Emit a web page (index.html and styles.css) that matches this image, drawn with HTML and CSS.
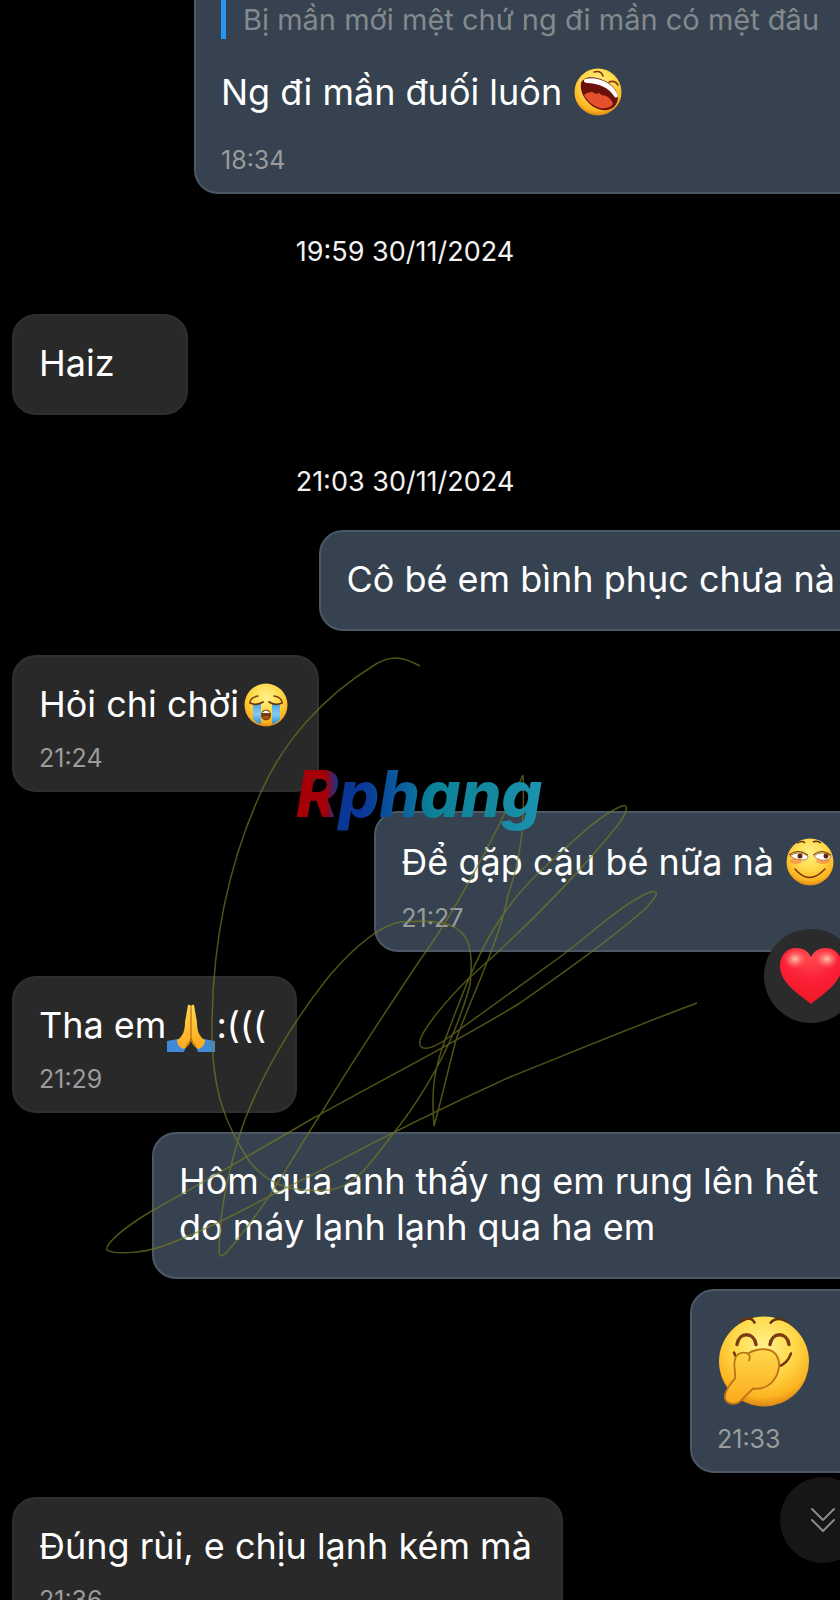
FILE: index.html
```html
<!DOCTYPE html>
<html lang="vi">
<head>
    <meta charset="UTF-8">
    <meta name="viewport" content="width=device-width, initial-scale=1.0">
    <title>Chat</title>
    <link rel="stylesheet" href="styles.css">
</head>
<body>
    <!-- shared gradients for the emoji -->
    <svg class="defs" width="0" height="0" aria-hidden="true">
        <defs>
            <radialGradient id="face" cx="50%" cy="32%" r="68%">
                <stop offset="0" stop-color="#fff18a"/>
                <stop offset="0.5" stop-color="#ffd94a"/>
                <stop offset="0.85" stop-color="#fcb320"/>
                <stop offset="1" stop-color="#dc8617"/>
            </radialGradient>
            <linearGradient id="hand" x1="0" y1="0" x2="0" y2="1">
                <stop offset="0" stop-color="#ffd84c"/>
                <stop offset="1" stop-color="#fca91c"/>
            </linearGradient>
            <linearGradient id="tear" x1="0" y1="0" x2="0" y2="1">
                <stop offset="0" stop-color="#4fa3dd"/>
                <stop offset="0.5" stop-color="#86ccf2"/>
                <stop offset="1" stop-color="#348ed4"/>
            </linearGradient>
            <radialGradient id="heart" cx="50%" cy="15%" r="85%">
                <stop offset="0" stop-color="#ff4a50"/>
                <stop offset="0.5" stop-color="#fc2038"/>
                <stop offset="1" stop-color="#f01822"/>
            </radialGradient>
            <radialGradient id="shine">
                <stop offset="0" stop-color="#ffc9b0"/>
                <stop offset="1" stop-color="#ff6a60" stop-opacity="0"/>
            </radialGradient>
        </defs>
    </svg>

    <main class="chat">
        <article class="bubble sent first">
            <blockquote class="quote">Bị mần mới mệt chứ ng đi mần có mệt đâu</blockquote>
            <p class="text with-emoji">Ng đi mần đuối luôn
                <svg class="emoji spaced" viewBox="0 0 48 48" role="img" aria-label="cười to">
                    <circle cx="24" cy="24" r="23.5" fill="url(#face)"/>
                    <path d="M7 15C10 8 20 8 29 12c9 4 14 10 15 17 0 9-7 14-16 13C16 40 5 27 7 15z" fill="#6b100b"/>
                    <path d="M10 27c5-5 14-3 20 0 5 2 8 5 9 9-3 4-8 5-13 4-7-2-13-7-16-13z" fill="#e5512e"/>
                    <path d="M11 11c13-3 29 4 33 17-1 2-3 2-4 0-5-8-16-13-27-13-3 0-4-3-2-4z" fill="#fff"/>
                    <path d="M19 25l1-5q2-2 3 1l1 5M26 26l1-5q2-1 3 2v5" fill="#6b100b"/>
                    <path d="M20 4q7-2 9 4M35 14q6-2 9 3" fill="none" stroke="#823711" stroke-width="1.6" stroke-linecap="round"/>
                </svg>
            </p>
            <time class="time">18:34</time>
        </article>

        <p class="date">19:59 30/11/2024</p>

        <article class="bubble received">
            <p class="text">Haiz</p>
        </article>

        <p class="date late">21:03 30/11/2024</p>

        <article class="bubble sent">
            <p class="text">Cô bé em bình phục chưa nà</p>
        </article>

        <article class="bubble received">
            <p class="text">Hỏi chi chời<svg class="emoji small" viewBox="0 0 44 44" role="img" aria-label="khóc to">
                    <circle cx="22" cy="22" r="21.5" fill="url(#face)"/>
                    <path d="M9 21h8v20q-5-1-8-5zM28 21h8v15q-3 4-8 5z" fill="url(#tear)"/>
                    <path d="M6 19q1-5 8-6M38 19q-1-5-8-6" fill="none" stroke="#79410d" stroke-width="1.4" stroke-linecap="round"/>
                    <path d="M6 20q7 3 13-1M38 20q-7 3-13-1" fill="none" stroke="#6c3509" stroke-width="1.8" stroke-linecap="round"/>
                    <path d="M17 32c0-7 10-7 10 0s-10 7-10 0z" fill="#74410c"/>
                    <path d="M18 30q4-5 8 0z" fill="#fff"/>
                    <path d="M18 34q4-2 8 0-4 4-8 0z" fill="#b4541b"/>
                </svg></p>
            <time class="time">21:24</time>
        </article>

        <article class="bubble sent">
            <p class="text with-emoji">Để gặp cậu bé nữa nà
                <svg class="emoji spaced" viewBox="0 0 48 48" role="img" aria-label="cười gian">
                    <circle cx="24" cy="24" r="23.5" fill="url(#face)"/>
                    <ellipse cx="10" cy="23" rx="6" ry="3" fill="#f77c4f" opacity="0.6"/>
                    <ellipse cx="37" cy="23" rx="7" ry="3" fill="#f77c4f" opacity="0.6"/>
                    <path d="M4 18q8-6 18 0 0 4-5 4Q9 22 4 18zM28 18q8-6 17 0-1 4-5 4-8 1-12-4z" fill="#fff" stroke="#a5702a" stroke-width="0.8"/>
                    <path d="M3 17q9-7 19 0M27 17q9-7 18 0" fill="none" stroke="#5b3213" stroke-width="1"/>
                    <circle cx="14" cy="18" r="2.5" fill="#5c2812"/>
                    <circle cx="40" cy="18" r="2.5" fill="#5c2812"/>
                    <path d="M11 5q6-3 8 0M27 4q4-2 8 1" fill="none" stroke="#5b3213" stroke-width="1.4"/>
                    <path d="M9 31q14 17 30 0" fill="none" stroke="#70330d" stroke-width="1.4" stroke-linecap="round"/>
                </svg>
            </p>
            <time class="time">21:27</time>
            <button type="button" class="reaction" aria-label="Yêu thích">
                <svg viewBox="0 0 64 58">
                    <path d="M32 57C20 47 1 36 1 19 1 8 8 1 17 1c7 0 12 3 15 9C35 4 40 1 47 1c9 0 16 7 16 18 0 17-19 28-31 38z" fill="url(#heart)"/>
                    <ellipse cx="16" cy="12" rx="12" ry="10" fill="url(#shine)"/>
                    <ellipse cx="48" cy="12" rx="12" ry="10" fill="url(#shine)"/>
                </svg>
            </button>
        </article>

        <article class="bubble received">
            <p class="text">Tha em<svg class="emoji" viewBox="0 0 48 48" role="img" aria-label="chắp tay">
                    <path d="M0 37l11-2 8 8-2 5H0zM48 37l-11-2-8 8 2 5h17z" fill="#3f8bd8"/>
                    <path d="M21 1q3-1 3 3v32c-1 5-5 8-8 9-4-2-6-5-6-9 6-3 8-10 8-18z" fill="url(#hand)"/>
                    <path d="M27 1q-3-1-3 3v32c1 5 5 8 8 9 4-2 6-5 6-9-6-3-8-10-8-18z" fill="url(#hand)"/>
                    <path d="M24 3v31q-1 5-5 8M24 34q1 5 5 8" fill="none" stroke="#b96c0c" stroke-width="1.2"/>
                </svg>:(((</p>
            <time class="time">21:29</time>
        </article>

        <article class="bubble sent">
            <p class="text">Hôm qua anh thấy ng em rung lên hết do máy lạnh lạnh qua ha em</p>
        </article>

        <article class="bubble sent follow">
            <svg class="sticker" viewBox="0 0 92 92" role="img" aria-label="che miệng cười">
                <circle cx="47" cy="46" r="45" fill="url(#face)"/>
                <path d="M23 6q11-7 15 2M53 8q6-8 17-2" fill="none" stroke="#64310f" stroke-width="2.4"/>
                <path d="M20 29c2-13 17-13 19 0M53 29c2-13 17-13 19 0" fill="none" stroke="#7b3a12" stroke-width="3.4" stroke-linecap="round"/>
                <path d="M17 37q2 6 6 8M74 38q-4 11-13 13" fill="none" stroke="#7b3012" stroke-width="2.4" stroke-linecap="round"/>
                <path d="M18 63C19 57 16 50 18 44c1-6 7-8 13-6 4-3 13-5 19-4 8 1 13 8 12 18-2 13-12 23-26 21L23 86c-5 4-13 3-15-3-1-7 5-14 10-20z" fill="url(#hand)" stroke="#bb7518" stroke-width="1.8"/>
                <path d="M31 38q3 2 1 7" fill="none" stroke="#bb7518" stroke-width="1.8" stroke-linecap="round"/>
            </svg>
            <time class="time">21:33</time>
        </article>

        <article class="bubble received">
            <p class="text">Đúng rùi, e chịu lạnh kém mà</p>
            <time class="time">21:36</time>
        </article>

        <button type="button" class="scroll-down" aria-label="Xuống cuối">
            <svg viewBox="0 0 26 26" fill="none" stroke="#8b8b8b" stroke-width="2" stroke-linecap="round" stroke-linejoin="round">
                <path d="M2 2l11 11L24 2M2 13l11 11 11-11"/>
            </svg>
        </button>

        <!-- pen strokes over the conversation -->
        <svg class="scribble" viewBox="0 0 840 1600" aria-hidden="true">
            <path d="M420 666C405 658 393 654 376 664C320 698 282 745 262 790C225 870 212 950 212 1030C212 1090 225 1125 250 1162C272 1190 300 1192 330 1190C360 1185 375 1155 400 1125C430 1085 455 1040 470 985C472 965 472 950 466 938C455 920 430 920 400 922C375 927 350 952 330 975C290 1025 255 1085 238 1140C225 1185 220 1215 219 1250C219 1260 223 1258 240 1236C270 1200 300 1145 322 1112C350 1065 380 1020 420 960C460 905 500 825 523 775C525 830 520 860 508 895C500 940 470 1000 456 1040C448 1070 440 1105 434 1126C431 1090 434 1070 445 1040C460 1000 475 960 493 930C515 895 530 880 560 853C580 835 600 815 622 806C630 803 626 815 617 826C590 860 540 915 478 970C455 990 425 1025 420 1040C418 1052 430 1050 445 1040L560 957C590 935 620 905 650 892C662 890 655 898 645 909C610 940 560 975 520 1003C460 1040 400 1070 310 1120C250 1155 190 1190 150 1212C120 1230 105 1245 107 1250C112 1254 140 1254 160 1247C210 1230 260 1200 310 1176C350 1155 400 1127 510 1077C570 1053 640 1024 697 1003"/>
        </svg>

        <div class="watermark">Rphang</div>
    </main>
</body>
</html>
```

FILE: styles.css
```css
* {
    box-sizing: border-box;
}
body {
    margin: 0;
    background-color: #000;
    color: #fff;
    font-family: Inter, "Noto Sans", sans-serif;
}
p,
blockquote {
    margin: 0;
}
button {
    border: none;
    padding: 0;
    cursor: pointer;
}
.defs {
    position: absolute;
}
.chat {
    position: relative;
    display: flex;
    flex-direction: column;
    height: 100vh;
    padding: 0 12px;
    overflow: hidden;
}

/* bubbles */
.bubble {
    position: relative;
    flex-shrink: 0;
    min-width: 176px;
    padding: 24px 29px 17px 25px;
    border: 2px solid;
    border-radius: 24px;
}
.received {
    align-self: flex-start;
    margin-top: 24px;
    background-color: #292929;
    border-color: #2f2f2f;
}
.sent {
    align-self: flex-end;
    max-width: 714px;
    margin-top: 19px;
    margin-right: -38px;
    background-color: #36424f;
    border-color: #4b5866;
}
.follow {
    margin-top: 10px;
}
.first {
    width: 672px;
    margin-top: 0;
    padding-top: 0;
    border-top: none;
    border-radius: 0 0 24px 24px;
}
.text {
    font-size: 36px;
    line-height: 46px;
}
.text:last-child {
    padding-bottom: 10px;
}
.with-emoji {
    display: flex;
    align-items: center;
    height: 50px;
}
.time {
    display: block;
    margin-top: 16px;
    font-size: 25px;
    line-height: 30px;
    color: #9a9b9d;
}
.quote {
    height: 39px;
    padding-left: 17px;
    border-left: 5px solid #2496f3;
    color: #84898e;
    font-size: 29px;
    line-height: 40px;
    white-space: nowrap;
}
.first .text {
    margin-top: 28px;
}
.first .time {
    margin-top: 28px;
}

.emoji {
    width: 48px;
    height: 48px;
    margin: -6px 1px;
    vertical-align: middle;
}
.spaced {
    margin-left: 12px;
}
.small {
    width: 44px;
    height: 44px;
    margin: -8px 0 -4px 5px;
}
.sticker {
    display: block;
    width: 92px;
    height: 93px;
}

.date {
    flex-shrink: 0;
    margin: 43px 38px 23px 8px;
    font-size: 27px;
    line-height: 30px;
    text-align: center;
    color: #f2f2f2;
}
.late {
    margin-top: 52px;
    margin-bottom: 14px;
}

/* floating parts */
.reaction {
    position: absolute;
    right: 6px;
    bottom: -73px;
    display: flex;
    align-items: center;
    justify-content: center;
    width: 94px;
    height: 94px;
    border-radius: 50%;
    background-color: #2b2b2b;
}
.reaction svg {
    width: 64px;
    height: 58px;
}
.scroll-down {
    position: absolute;
    right: -26px;
    bottom: 37px;
    display: flex;
    align-items: center;
    justify-content: center;
    width: 86px;
    height: 86px;
    border-radius: 50%;
    background-color: #161616;
}
.scroll-down svg {
    width: 26px;
    height: 26px;
}
.scribble {
    position: absolute;
    top: 0;
    left: 0;
    width: 840px;
    height: 1600px;
    pointer-events: none;
}
.scribble path {
    fill: none;
    stroke: #7b8020;
    stroke-width: 1.5;
    opacity: 0.65;
}
.watermark {
    position: absolute;
    top: 754px;
    left: 292px;
    padding: 0 8px 0 4px;
    font-size: 64px;
    font-style: italic;
    font-weight: 800;
    line-height: 80px;
    background: linear-gradient(90deg, #a50008 13%, #0a3796 18%, #0a3796 27%, #0a589e 40%, #0c8298 55%, #16899f 80%, #1c96b4);
    background-clip: text;
    -webkit-background-clip: text;
    color: transparent;
    pointer-events: none;
}
```
